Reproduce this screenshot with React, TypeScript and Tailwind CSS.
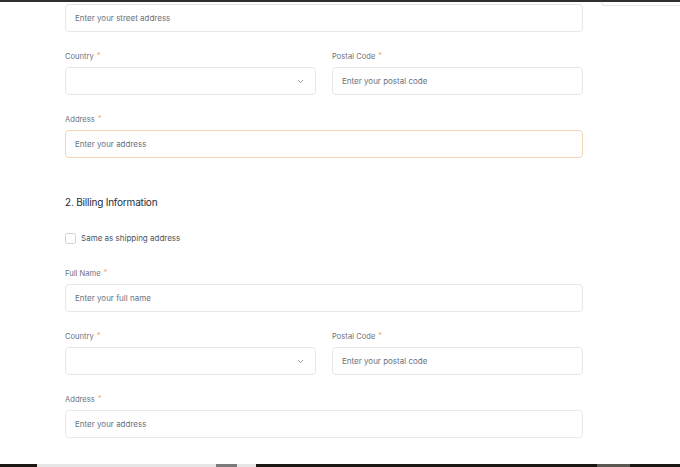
import React from 'react';
import { ChevronDown } from 'lucide-react';

const Label: React.FC<{ text: string }> = ({ text }) => (
  <label className="block text-[7.6px] leading-[11px] text-[#6b7280] mb-[5px]">
    {text}
    <span className="text-[#f2a66c] ml-[3px] relative -top-[1px]">*</span>
  </label>
);

const TextInput: React.FC<{ placeholder: string; focused?: boolean }> = ({ placeholder, focused }) => (
  <input
    type="text"
    placeholder={placeholder}
    className={`block w-full h-[28px] rounded-[4px] border bg-white px-[9px] text-[8px] text-[#374151] placeholder:text-[#6b7280] outline-none ${
      focused ? 'border-[#f3d5b5]' : 'border-[#e5e7eb]'
    }`}
  />
);

const SelectBox: React.FC = () => (
  <div className="flex h-[28px] items-center justify-end rounded-[4px] border border-[#e5e7eb] bg-white pr-[10px]">
    <ChevronDown size={9} strokeWidth={2} className="text-[#6b7280]" />
  </div>
);

const CountryPostal: React.FC = () => (
  <div className="grid grid-cols-2 gap-4">
    <div>
      <Label text="Country" />
      <SelectBox />
    </div>
    <div>
      <Label text="Postal Code" />
      <TextInput placeholder="Enter your postal code" />
    </div>
  </div>
);

export default function App() {
  return (
    <div
      className="relative flex h-screen flex-col bg-white"
      style={{ fontFamily: 'Inter, "Noto Sans", sans-serif' }}
    >
      {/* top edge */}
      <div className="h-[2px] bg-[#2f2f2f]" />
      <div className="absolute right-0 top-[2px] h-[4px] w-[79px] rounded-bl-[4px] border-b border-l border-[#e5e7eb]" />

      <div className="ml-[65px] w-[518px] pt-[2px]">
        {/* shipping (continued) */}
        <TextInput placeholder="Enter your street address" />

        <div className="mt-[19px]">
          <CountryPostal />
        </div>

        <div className="mt-[19px]">
          <Label text="Address" />
          <TextInput placeholder="Enter your address" focused />
        </div>

        {/* billing */}
        <h2 className="mt-[37px] text-[10px] leading-[14px] tracking-[-0.2px] text-[#1f2937]">
          2. Billing Information
        </h2>

        <label className="mt-[23px] flex h-[12px] items-center gap-[5px]">
          <span className="h-[11px] w-[11px] rounded-[2px] border border-[#d1d5db] bg-white" />
          <span className="text-[8px] text-[#4b5563]">Same as shipping address</span>
        </label>

        <div className="mt-[24px]">
          <Label text="Full Name" />
          <TextInput placeholder="Enter your full name" />
        </div>

        <div className="mt-[19px]">
          <CountryPostal />
        </div>

        <div className="mt-[19px]">
          <Label text="Address" />
          <TextInput placeholder="Enter your address" />
        </div>
      </div>

      {/* bottom strip */}
      <div className="mt-auto flex h-[3px] bg-[#1a1712]">
        <div className="ml-[37px] flex w-[219px] bg-[#e6e6e6]">
          <div className="ml-[179px] w-[21px] bg-[#7a7a7a]" />
        </div>
        <div className="ml-[341px] w-[33px] bg-[#5a5650]" />
      </div>
    </div>
  );
}
